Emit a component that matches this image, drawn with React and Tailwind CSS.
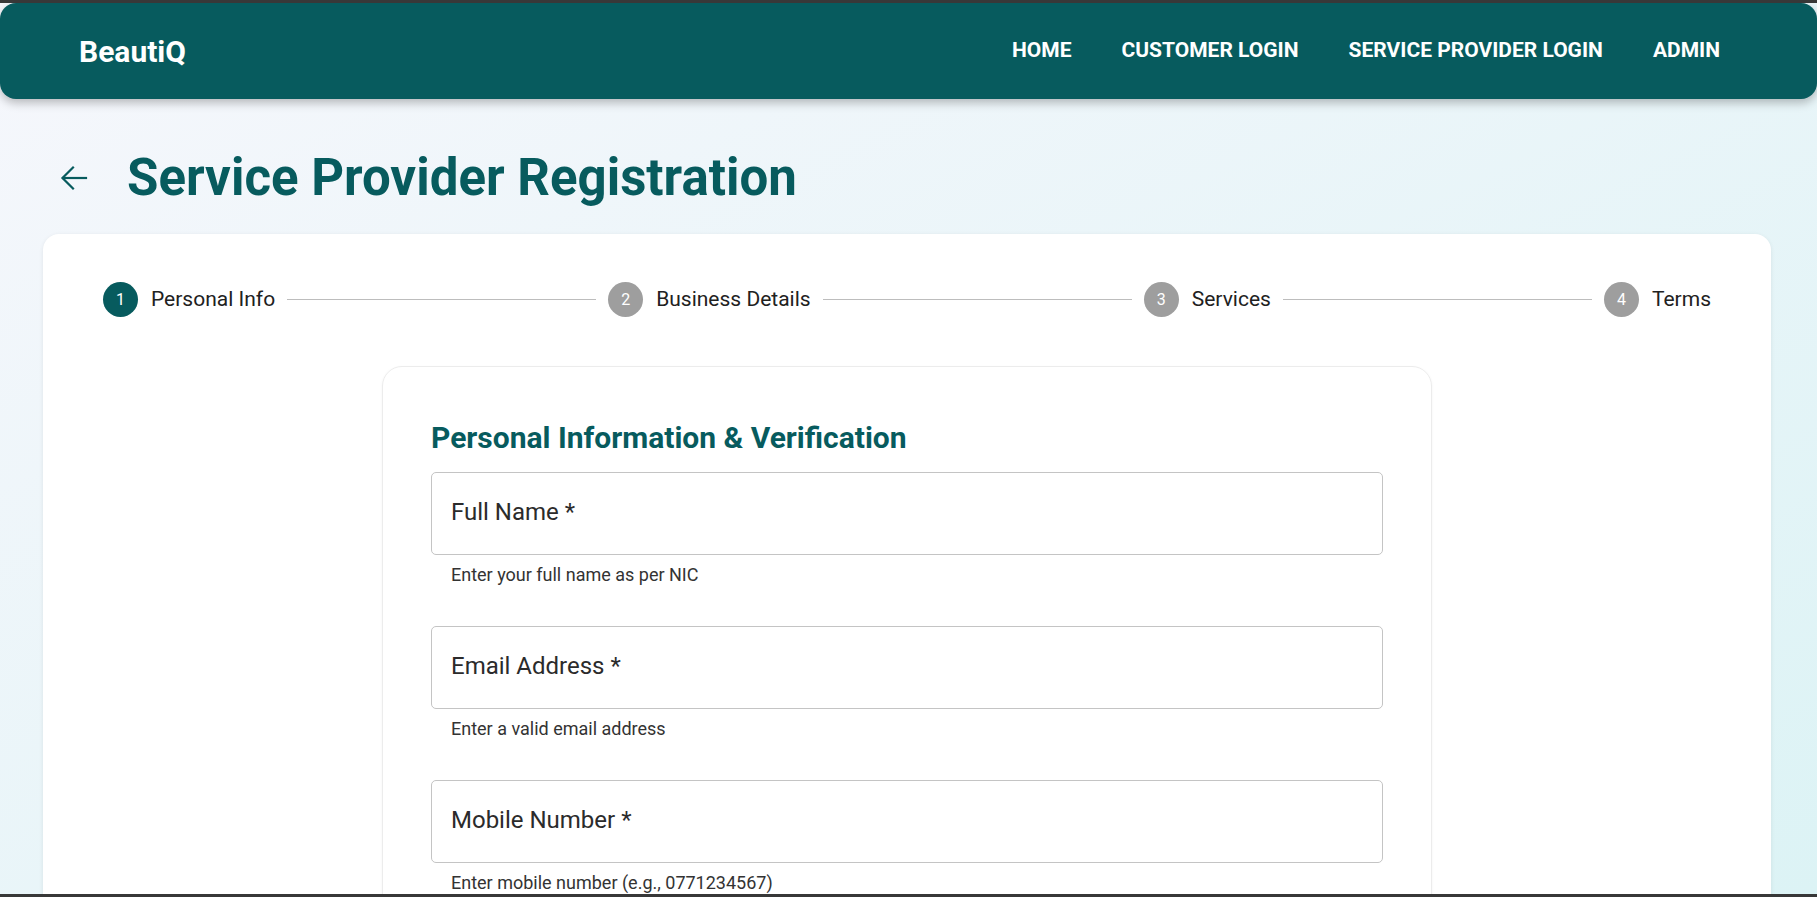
import React from "react";

const navItems = ["HOME", "CUSTOMER LOGIN", "SERVICE PROVIDER LOGIN", "ADMIN"];

const steps = ["Personal Info", "Business Details", "Services", "Terms"];

const fields = [
  { label: "Full Name", helper: "Enter your full name as per NIC" },
  { label: "Email Address", helper: "Enter a valid email address" },
  { label: "Mobile Number", helper: "Enter mobile number (e.g., 0771234567)" },
];

const BackArrow = () => (
  <svg width="28" height="26" viewBox="0 0 28 26" fill="none" stroke="#075b5e" strokeWidth="2.2" strokeLinecap="square">
    <path d="M26 13H3" />
    <path d="M13 2.5L2.5 13L13 23.5" />
  </svg>
);

const Stepper = ({ active }) => (
  <div className="flex items-center">
    {steps.map((step, i) => (
      <React.Fragment key={step}>
        {i > 0 && <div className="flex-1 h-px bg-[#bdbdbd] mx-3" />}
        <div className="flex items-center gap-[13px]">
          <div
            className={
              i === active
                ? "w-[35px] h-[35px] rounded-full bg-[#075b5e] text-white flex items-center justify-center text-[16px]"
                : "w-[35px] h-[35px] rounded-full bg-[#9e9e9e] text-white flex items-center justify-center text-[16px]"
            }
          >
            {i + 1}
          </div>
          <span className="text-[21px] text-[#212121]">{step}</span>
        </div>
      </React.Fragment>
    ))}
  </div>
);

const Field = ({ label, helper }) => (
  <div className="mb-[39px]">
    <div className="h-[83px] border border-[#c4c4c4] rounded-[5px] pl-[19px] pt-[24px]">
      <span className="text-[24px] leading-[30px] text-[#2b2b2b]">{label} *</span>
    </div>
    <p className="mt-[8px] pl-[20px] text-[18px] leading-[24px] text-[#333]">{helper}</p>
  </div>
);

export default function App() {
  return (
    <div className="h-[897px] overflow-hidden border-y-[3px] border-[#383838] bg-gradient-to-br from-[#f6f7fc] to-[#dcf3f5] font-['Roboto',sans-serif]">
      {/* Navbar */}
      <nav className="h-[96px] rounded-2xl bg-[#075b5e] shadow-[0_4px_10px_rgba(0,0,0,0.25)] flex items-center justify-between pl-[79px] pr-[97px]">
        <span className="text-white font-bold text-[30px]">BeautiQ</span>
        <div className="flex items-center gap-[50px]">
          {navItems.map((item) => (
            <span key={item} className="text-white font-bold text-[21px]">
              {item}
            </span>
          ))}
        </div>
      </nav>

      {/* Page title */}
      <div className="flex items-center pl-[60px] mt-[50px] h-[58px]">
        <BackArrow />
        <h1 className="ml-[39px] text-[51px] font-bold text-[#075b5e]">Service Provider Registration</h1>
      </div>

      {/* Main card */}
      <div className="ml-[43px] mr-[46px] mt-[27px] bg-white rounded-2xl shadow-[0_1px_4px_rgba(0,0,0,0.08)] pt-[48px] px-[60px] pb-10">
        <Stepper active={0} />

        <div className="w-[1050px] mx-auto mt-[49px] rounded-[20px] border border-[#ececec] shadow-[0_1px_3px_rgba(0,0,0,0.05)] px-12 pt-[53px]">
          <h2 className="text-[30px] leading-[36px] font-bold text-[#075b5e] mb-[16px]">
            Personal Information &amp; Verification
          </h2>
          {fields.map((f) => (
            <Field key={f.label} {...f} />
          ))}
        </div>
      </div>
    </div>
  );
}
